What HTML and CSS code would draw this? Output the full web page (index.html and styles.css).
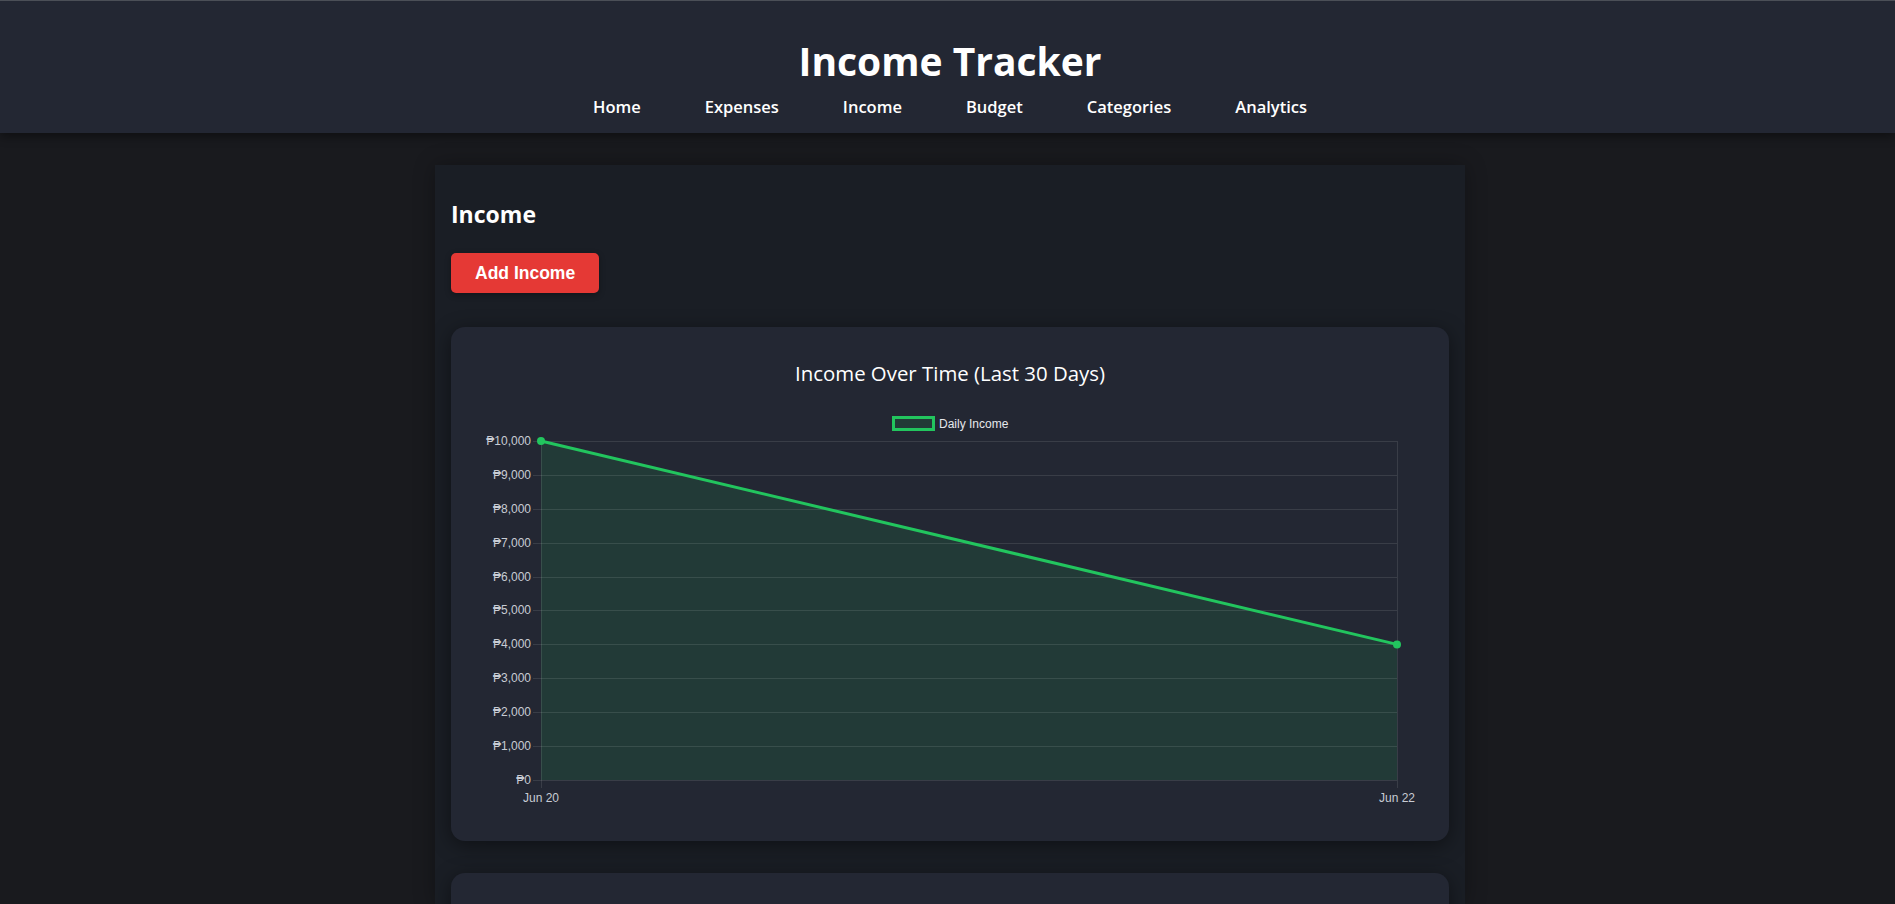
FILE: index.html
```html
<!DOCTYPE html>
<html lang="en">
<head>
<meta charset="utf-8">
<title>Income Tracker</title>
<link rel="stylesheet" href="styles.css">
</head>
<body>
<header class="site-header">
  <h1 class="site-title">Income Tracker</h1>
  <nav class="nav">
    <a href="#">Home</a>
    <a href="#">Expenses</a>
    <a href="#">Income</a>
    <a href="#">Budget</a>
    <a href="#">Categories</a>
    <a href="#">Analytics</a>
  </nav>
</header>
<div class="page">
  <main class="container">
    <h2 class="section-title">Income</h2>
    <button class="btn-add">Add Income</button>
    <section class="card">
      <h3 class="card-title">Income Over Time (Last 30 Days)</h3>
      <svg class="chart" width="959" height="421" viewBox="0 0 959 421">
        <g class="legend">
          <rect x="422.5" y="17.5" width="40" height="12" fill="rgba(34,197,94,0.12)" stroke="#22c55e" stroke-width="3"/>
          <text x="468" y="28.3" class="legend-text">Daily Income</text>
        </g>
        <polygon points="70,41 926,244.4 926,380 70,380" fill="rgba(34,197,94,0.12)"/>
        <g stroke="rgba(255,255,255,0.1)" stroke-width="1">
          <line x1="62" y1="41.5" x2="926" y2="41.5"/>
          <line x1="62" y1="75.5" x2="926" y2="75.5"/>
          <line x1="62" y1="109.5" x2="926" y2="109.5"/>
          <line x1="62" y1="143.5" x2="926" y2="143.5"/>
          <line x1="62" y1="177.5" x2="926" y2="177.5"/>
          <line x1="62" y1="210.5" x2="926" y2="210.5"/>
          <line x1="62" y1="244.5" x2="926" y2="244.5"/>
          <line x1="62" y1="278.5" x2="926" y2="278.5"/>
          <line x1="62" y1="312.5" x2="926" y2="312.5"/>
          <line x1="62" y1="346.5" x2="926" y2="346.5"/>
          <line x1="62" y1="380.5" x2="926" y2="380.5"/>
          <line x1="70.5" y1="41" x2="70.5" y2="388"/>
          <line x1="926.5" y1="41" x2="926.5" y2="388"/>
        </g>
        <g class="tick-y" text-anchor="end">
          <text x="60" y="45.3">₱10,000</text>
          <text x="60" y="79.3">₱9,000</text>
          <text x="60" y="113.3">₱8,000</text>
          <text x="60" y="147.3">₱7,000</text>
          <text x="60" y="181.3">₱6,000</text>
          <text x="60" y="214.3">₱5,000</text>
          <text x="60" y="248.3">₱4,000</text>
          <text x="60" y="282.3">₱3,000</text>
          <text x="60" y="316.3">₱2,000</text>
          <text x="60" y="350.3">₱1,000</text>
          <text x="60" y="384.3">₱0</text>
        </g>
        <g class="tick-x" text-anchor="middle">
          <text x="70" y="402.3">Jun 20</text>
          <text x="926" y="402.3">Jun 22</text>
        </g>
        <line x1="70" y1="41" x2="926" y2="244.4" stroke="#22c55e" stroke-width="3"/>
        <circle cx="70" cy="41" r="4" fill="#22c55e"/>
        <circle cx="926" cy="244.4" r="4" fill="#22c55e"/>
      </svg>
    </section>
    <section class="card card-second"></section>
  </main>
</div>
</body>
</html>
```
FILE: styles.css
```css
html, body {
  margin: 0;
  padding: 0;
}
body {
  background: #191a1e;
  color: #fff;
  font-family: "Open Sans", "Noto Sans", sans-serif;
  overflow: hidden;
}
.site-header {
  background: #232733;
  border-top: 1px solid #4b4f57;
  padding: 36px 0 14px 5px;
  box-shadow: 0 3px 10px rgba(0, 0, 0, 0.45);
  text-align: center;
  position: relative;
  z-index: 1;
}
.site-title {
  margin: 0;
  font-size: 39px;
  line-height: 48px;
  font-weight: 700;
  color: #fff;
}
.nav {
  display: flex;
  justify-content: center;
  gap: 64px;
  margin-top: 10px;
}
.nav a {
  color: #fff;
  text-decoration: none;
  font-size: 16.5px;
  line-height: 24px;
  font-weight: 600;
}
.page {
  padding: 32px 0 0 5px;
}
.container {
  width: 1030px;
  box-sizing: border-box;
  margin: 0 auto;
  background: #1a1e25;
  padding: 0 16px 16px;
  box-shadow: 0 0 20px rgba(0, 0, 0, 0.3);
  overflow: hidden;
  height: 740px;
}
.section-title {
  margin: 0;
  padding-top: 33px;
  font-size: 23px;
  line-height: 32px;
  font-weight: 700;
}
.btn-add {
  display: block;
  margin-top: 23px;
  height: 40px;
  padding: 1px 24px 0;
  background: #e53935;
  color: #fff;
  border: none;
  border-radius: 5px;
  font-family: "Liberation Sans", Arial, sans-serif;
  font-weight: 700;
  font-size: 17.5px;
  box-shadow: 0 2px 6px rgba(0, 0, 0, 0.3);
}
.card {
  margin-top: 34px;
  background: #232733;
  border-radius: 14px;
  padding: 20px;
  box-shadow: 0 4px 20px rgba(0, 0, 0, 0.45);
}
.card-title {
  margin: 12px 0 13px;
  text-align: center;
  font-size: 20.4px;
  line-height: 28px;
  font-weight: 400;
  color: #fff;
}
.chart {
  display: block;
}
.chart text {
  font-family: "Liberation Sans", Arial, "DejaVu Sans", sans-serif;
  font-size: 12px;
}
.legend-text {
  fill: #e6e8ec;
}
.tick-y text, .tick-x text {
  fill: #c8ccd4;
}
.card-second {
  margin-top: 32px;
  height: 200px;
}
```
